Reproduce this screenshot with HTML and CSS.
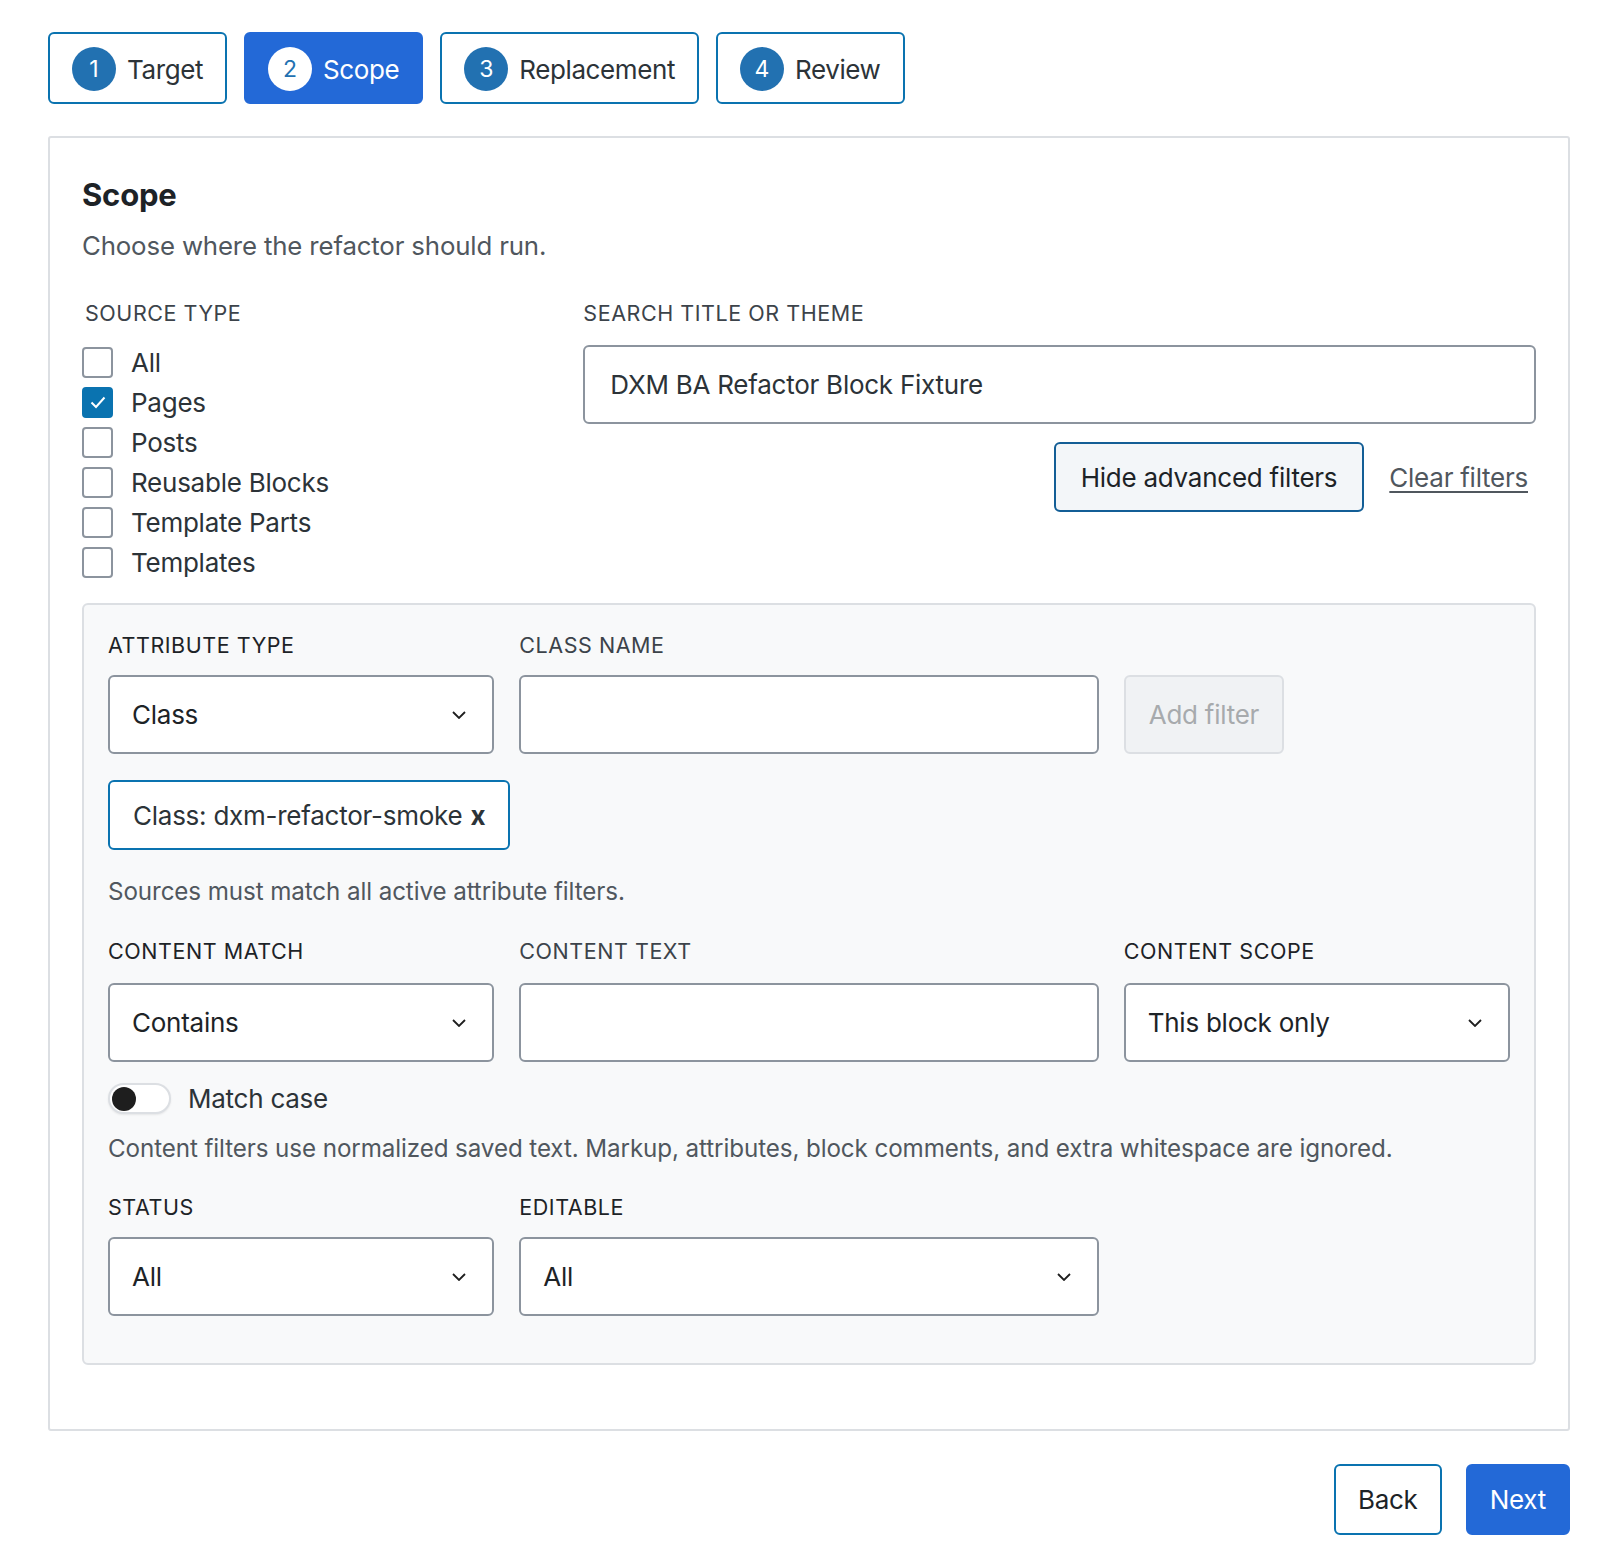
FILE: index.html
```html
<!DOCTYPE html>
<html lang="en">
<head>
  <meta charset="utf-8" />
  <meta name="viewport" content="width=device-width, initial-scale=1" />
  <title>Refactor – Scope</title>
  <link rel="stylesheet" href="styles.css">
</head>
<body>
<div class="wiz">
  <nav class="wiz-steps">
    <button class="wiz-step" type="button"><span class="wiz-step--num">1</span>Target</button>
    <button class="wiz-step wiz-step--active" type="button"><span class="wiz-step--num">2</span>Scope</button>
    <button class="wiz-step" type="button"><span class="wiz-step--num">3</span>Replacement</button>
    <button class="wiz-step" type="button"><span class="wiz-step--num">4</span>Review</button>
  </nav>

  <section class="wiz-card">
    <h2 class="wiz-title">Scope</h2>
    <p class="wiz-lead">Choose where the refactor should run.</p>

    <div class="wiz-top">
      <div class="wiz-sources" role="group" aria-label="Source type">
        <span class="wiz-label wiz-label--source">Source type</span>
        <label class="wiz-check"><span class="wiz-box"></span>All</label>
        <label class="wiz-check"><span class="wiz-box wiz-box--on"><svg width="26" height="26" viewBox="0 0 26 26"><path d="M6.5 13.5 L11 18 L19.5 8.5" fill="none" stroke="#fff" stroke-width="2"/></svg></span>Pages</label>
        <label class="wiz-check"><span class="wiz-box"></span>Posts</label>
        <label class="wiz-check"><span class="wiz-box"></span>Reusable Blocks</label>
        <label class="wiz-check"><span class="wiz-box"></span>Template Parts</label>
        <label class="wiz-check"><span class="wiz-box"></span>Templates</label>
      </div>

      <div class="wiz-search">
        <label class="wiz-label" for="search">Search title or theme</label>
        <input class="wiz-input wiz-input--search" id="search" type="text" value="DXM BA Refactor Block Fixture" />
        <div class="wiz-actions">
          <button class="wiz-button wiz-button--soft" type="button">Hide advanced filters</button>
          <a class="wiz-link" href="#">Clear filters</a>
        </div>
      </div>
    </div>

    <div class="wiz-panel">
      <div class="wiz-row">
        <div class="wiz-field">
          <span class="wiz-label wiz-label--dark">Attribute type</span>
          <div class="wiz-select">Class<svg width="14" height="8" viewBox="0 0 14 8"><path d="M1 1 L7 7 L13 1" fill="none" stroke="#1e1e1e" stroke-width="1.8"/></svg></div>
        </div>
        <div class="wiz-field">
          <label class="wiz-label" for="classname">Class name</label>
          <input class="wiz-input" id="classname" type="text" value="" />
        </div>
        <div class="wiz-field wiz-field--end">
          <button class="wiz-button wiz-button--off" type="button" disabled>Add filter</button>
        </div>
      </div>

      <div class="wiz-chips">
        <span class="wiz-chip">Class: dxm-refactor-smoke <b>x</b></span>
      </div>
      <p class="wiz-help wiz-help--chips">Sources must match all active attribute filters.</p>

      <div class="wiz-row wiz-row--content">
        <div class="wiz-field">
          <span class="wiz-label wiz-label--dark">Content match</span>
          <div class="wiz-select">Contains<svg width="14" height="8" viewBox="0 0 14 8"><path d="M1 1 L7 7 L13 1" fill="none" stroke="#1e1e1e" stroke-width="1.8"/></svg></div>
        </div>
        <div class="wiz-field">
          <label class="wiz-label" for="contenttext">Content text</label>
          <input class="wiz-input" id="contenttext" type="text" value="" />
        </div>
        <div class="wiz-field">
          <span class="wiz-label wiz-label--dark">Content scope</span>
          <div class="wiz-select">This block only<svg width="14" height="8" viewBox="0 0 14 8"><path d="M1 1 L7 7 L13 1" fill="none" stroke="#1e1e1e" stroke-width="1.8"/></svg></div>
        </div>
      </div>

      <label class="wiz-toggle"><span class="wiz-switch"><span class="wiz-knob"></span></span>Match case</label>
      <p class="wiz-help wiz-help--content">Content filters use normalized saved text. Markup, attributes, block comments, and extra whitespace are ignored.</p>

      <div class="wiz-row wiz-row--status">
        <div class="wiz-field">
          <span class="wiz-label wiz-label--dark">Status</span>
          <div class="wiz-select">All<svg width="14" height="8" viewBox="0 0 14 8"><path d="M1 1 L7 7 L13 1" fill="none" stroke="#1e1e1e" stroke-width="1.8"/></svg></div>
        </div>
        <div class="wiz-field">
          <span class="wiz-label wiz-label--dark">Editable</span>
          <div class="wiz-select">All<svg width="14" height="8" viewBox="0 0 14 8"><path d="M1 1 L7 7 L13 1" fill="none" stroke="#1e1e1e" stroke-width="1.8"/></svg></div>
        </div>
      </div>
    </div>
  </section>

  <div class="wiz-footer">
    <button class="wiz-button wiz-button--back" type="button">Back</button>
    <button class="wiz-button wiz-button--next" type="button">Next</button>
  </div>
</div>
</body>
</html>
```

FILE: styles.css
```css
:root {
  --ink: #1d2327;
  --slate: #3c434a;
  --muted: #50575e;
  --line: #dcdfe3;
  --field: #8c949e;
  --wp-blue: #0a73b0;
  --circle: #2271b1;
  --primary: #2369d7;
  --panel: #f8f9fa;
}
html {
  height: 100%;
}
body {
  margin: 0;
  padding: 0;
  background-color: #fff;
  color: var(--ink);
  font-family: Inter, "Liberation Sans", sans-serif;
  font-size: 26px;
  letter-spacing: -0.25px;
}
button, input {
  font-family: inherit;
  font-size: inherit;
  letter-spacing: inherit;
  color: inherit;
}
.wiz {
  padding: 32px 48px 32px 48px;
}

/* steps */
.wiz-steps {
  display: flex;
  gap: 17px;
}
.wiz-step {
  display: flex;
  align-items: center;
  gap: 11px;
  height: 72px;
  padding: 2px 22px 0;
  border: 2px solid var(--wp-blue);
  border-radius: 6px;
  background: #fff;
  color: #2c3338;
  font-size: 26px;
  letter-spacing: -0.4px;
  cursor: pointer;
}
.wiz-step--num {
  display: flex;
  align-items: center;
  justify-content: center;
  width: 44px;
  height: 44px;
  border-radius: 50%;
  background: var(--circle);
  color: #fff;
  font-size: 23px;
  letter-spacing: 0;
}
.wiz-step--active {
  background: var(--primary);
  border-color: var(--primary);
  color: #fff;
}
.wiz-step--active .wiz-step--num {
  background: #fff;
  color: var(--circle);
}

/* card */
.wiz-card {
  margin-top: 32px;
  border: 2px solid var(--line);
  border-radius: 3px;
  padding: 32px 32px 64px;
}
.wiz-title {
  margin: 7px 0 0;
  font-size: 31px;
  line-height: 36px;
  font-weight: 700;
  letter-spacing: -0.2px;
  color: var(--ink);
}
.wiz-lead {
  margin: 15px 0 0;
  font-size: 25.8px;
  line-height: 35px;
  letter-spacing: -0.15px;
  color: var(--muted);
}
.wiz-label {
  display: block;
  padding-top: 2px;
  margin-bottom: 16px;
  font-size: 21.5px;
  line-height: 28px;
  text-transform: uppercase;
  letter-spacing: 0.55px;
  color: var(--slate);
}
.wiz-label--dark {
  color: var(--ink);
}
.wiz-label--source {
  padding-left: 3px;
  margin-bottom: 15px;
}

.wiz-top {
  display: grid;
  grid-template-columns: 1fr 2fr;
  gap: 25px;
  margin-top: 34px;
}
.wiz-check {
  display: flex;
  align-items: center;
  gap: 18px;
  height: 40px;
  color: #2c3338;
}
.wiz-box {
  display: flex;
  align-items: center;
  justify-content: center;
  box-sizing: border-box;
  width: 31px;
  height: 31px;
  border: 2px solid var(--field);
  border-radius: 4px;
  background: #fff;
}
.wiz-box--on {
  background: var(--wp-blue);
  border-color: var(--wp-blue);
}

.wiz-input {
  display: block;
  box-sizing: border-box;
  width: 100%;
  height: 79px;
  padding: 0 25px;
  border: 2px solid var(--field);
  border-radius: 6px;
  background: #fff;
  color: #2c3338;
}
.wiz-input--search {
  margin-top: 18px;
}
.wiz-actions {
  display: flex;
  justify-content: flex-end;
  align-items: center;
  gap: 17px;
  margin-top: 18px;
}
.wiz-button {
  box-sizing: border-box;
  height: 70px;
  padding: 0 23px;
  border: 2px solid var(--wp-blue);
  border-radius: 6px;
  background: #fff;
  cursor: pointer;
}
.wiz-button--soft {
  border-color: #135e96;
  background: #f3f6f9;
  color: var(--ink);
  padding: 0 25px;
}
.wiz-link {
  padding: 0 8px;
  color: var(--muted);
  text-decoration: underline;
  text-underline-offset: 4px;
}

/* advanced filters */
.wiz-panel {
  margin-top: 21px;
  border: 2px solid var(--line);
  border-radius: 6px;
  background: var(--panel);
  padding: 24px 24px 47px;
}
.wiz-row {
  display: grid;
  grid-template-columns: 2fr 3fr 2fr;
  gap: 25px;
}
.wiz-field--end {
  display: flex;
  align-items: flex-end;
}
.wiz-select {
  display: flex;
  align-items: center;
  justify-content: space-between;
  box-sizing: border-box;
  height: 79px;
  padding: 0 26px 0 22px;
  border: 2px solid var(--field);
  border-radius: 6px;
  background: #fff;
  color: var(--ink);
}
.wiz-button--off {
  height: 79px;
  border-color: var(--line);
  background: #f0f2f4;
  color: #a7aaad;
  cursor: default;
}
.wiz-chips {
  display: flex;
  margin-top: 26px;
}
.wiz-chip {
  display: flex;
  align-items: center;
  box-sizing: border-box;
  height: 70px;
  padding: 0 23px;
  border: 2px solid var(--wp-blue);
  border-radius: 6px;
  background: #fff;
  color: #2c3338;
}
.wiz-chip b {
  margin-left: 8px;
}
.wiz-help {
  margin: 0;
  font-size: 24.2px;
  line-height: 35px;
  letter-spacing: -0.1px;
  color: var(--muted);
}
.wiz-help--chips {
  margin-top: 24px;
}
.wiz-row--content {
  margin-top: 26px;
}
.wiz-row--content .wiz-label {
  margin-bottom: 18px;
}
.wiz-toggle {
  display: flex;
  align-items: center;
  gap: 17px;
  margin-top: 19px;
  height: 35px;
  color: #2c3338;
}
.wiz-switch {
  display: flex;
  align-items: center;
  box-sizing: border-box;
  width: 63px;
  height: 31px;
  padding: 0 2px;
  border: 2px solid var(--line);
  border-radius: 16px;
  background: #fff;
  box-shadow: 0 1px 2px rgba(0, 0, 0, 0.08);
}
.wiz-knob {
  width: 24px;
  height: 24px;
  border-radius: 50%;
  background: #1e1e1e;
}
.wiz-help--content {
  margin-top: 15px;
}
.wiz-row--status {
  margin-top: 25px;
}

/* footer */
.wiz-footer {
  display: flex;
  justify-content: flex-end;
  gap: 24px;
  margin-top: 33px;
}
.wiz-button--back {
  height: 71px;
  padding: 0 22px;
  color: var(--ink);
}
.wiz-button--next {
  height: 71px;
  padding: 0 22px;
  border-color: var(--primary);
  background: var(--primary);
  color: #fff;
}
```
